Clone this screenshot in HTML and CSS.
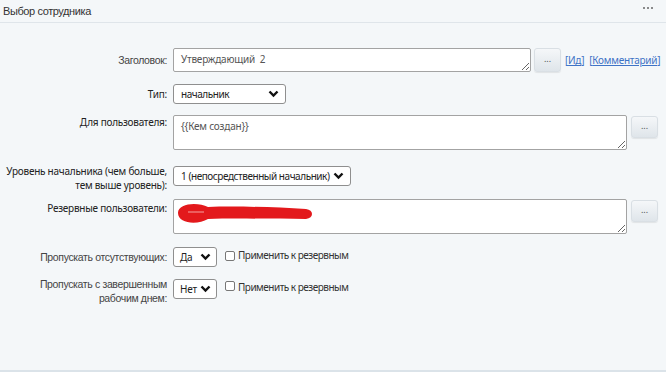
FILE: index.html
```html
<!DOCTYPE html>
<html lang="ru">
<head>
<meta charset="utf-8">
<link rel="stylesheet" href="styles.css">
</head>
<body>
<div class="panel">
  <div class="header">
    <span class="title">Выбор сотрудника</span>
    <span class="dots"><i></i><i></i><i></i></span>
  </div>
  <div class="form">
    <div class="row r1">
      <div class="label thin lh24">Заголовок:</div>
      <textarea class="ta ta-short">Утверждающий  2</textarea>
      <button class="btn b1">...</button>
      <span class="links"><a class="lnk">[<u>Ид</u>]</a><a class="lnk">[<u>Комментарий</u>]</a></span>
    </div>
    <div class="row r2">
      <div class="label lh20">Тип:</div>
      <div class="sel w-type"><span>начальник</span><svg width="11" height="8" viewBox="0 0 11 8"><path d="M1.5 1.5 L5.5 5.5 L9.5 1.5" fill="none" stroke="#111" stroke-width="2.4"/></svg></div>
    </div>
    <div class="row r3">
      <div class="label">Для пользователя:</div>
      <textarea class="ta ta-long">{{Кем создан}}</textarea>
      <button class="btn b2">...</button>
    </div>
    <div class="row r4">
      <div class="label">Уровень начальника (чем больше,<br>тем выше уровень):</div>
      <div class="sel w-level mt2"><span>1 (непосредственный начальник)</span><svg width="11" height="8" viewBox="0 0 11 8"><path d="M1.5 1.5 L5.5 5.5 L9.5 1.5" fill="none" stroke="#111" stroke-width="2.4"/></svg></div>
    </div>
    <div class="row r5">
      <div class="label pt2">Резервные пользователи:</div>
      <div class="ta-wrap">
        <textarea class="ta ta-long"></textarea>
        <svg class="scribble" width="142" height="28" viewBox="0 0 142 28"><path d="M4 13 C 4 3, 24 2, 34 7 C 60 6, 100 7, 132 9 C 140 10, 140 18, 132 19 C 100 19, 60 18, 34 19 C 24 25, 4 24, 4 13 Z" fill="#e3191c"/><path d="M14 12 L30 12" stroke="#f28a8a" stroke-width="1.2"/></svg>
      </div>
      <button class="btn b2">...</button>
    </div>
    <div class="row r6">
      <div class="label thin lh20">Пропускать отсутствующих:</div>
      <div class="sel w-yn"><span>Да</span><svg width="11" height="8" viewBox="0 0 11 8"><path d="M1.5 1.5 L5.5 5.5 L9.5 1.5" fill="none" stroke="#111" stroke-width="2.4"/></svg></div>
      <span class="chk"></span><span class="chk-text">Применить к резервным</span>
    </div>
    <div class="row r7">
      <div class="label thin">Пропускать с завершенным<br>рабочим днем:</div>
      <div class="sel w-yn mt2"><span>Нет</span><svg width="11" height="8" viewBox="0 0 11 8"><path d="M1.5 1.5 L5.5 5.5 L9.5 1.5" fill="none" stroke="#111" stroke-width="2.4"/></svg></div>
      <span class="chk mt6"></span><span class="chk-text mt3">Применить к резервным</span>
    </div>
  </div>
</div>
</body>
</html>
```
FILE: styles.css
```css
html, body {
  margin: 0;
  padding: 0;
  background: #f4f7f9;
}
body {
  font-family: "Noto Sans", "Open Sans", sans-serif;
  font-size: 10px;
  letter-spacing: -0.25px;
  color: #222;
}
.panel {
  height: 372px;
  box-sizing: border-box;
  border-bottom: 2px solid #dbe3e9;
}
.header {
  height: 22px;
  border-bottom: 1px solid #dfe5ea;
  display: flex;
  justify-content: space-between;
  align-items: center;
  padding: 0 13px 0 3px;
}
.title {
  font-family: "Liberation Sans", sans-serif;
  font-size: 11px;
  color: #333;
  letter-spacing: -0.4px;
}
.dots {
  display: flex;
  gap: 1.5px;
  margin-top: -6px;
}
.dots i {
  display: block;
  width: 2.5px;
  height: 2.5px;
  border-radius: 50%;
  background: #666;
}
.form {
  padding-top: 25px;
}
.row {
  display: flex;
  align-items: flex-start;
  white-space: nowrap;
}
.label {
  width: 167px;
  margin-right: 6px;
  text-align: right;
  line-height: 14px;
  color: #222;
  flex: none;
}
.thin {
  font-family: "Liberation Sans", sans-serif;
  font-size: 10.5px;
  color: #444;
  letter-spacing: -0.35px;
}
.lh24 { line-height: 24px; }
.lh20 { line-height: 20px; }
.pt2 { padding-top: 2px; }
.mt2 { margin-top: 2px; }
.mt3 { margin-top: 3px; }
.mt6 { margin-top: 6px; }
.r2 { margin-top: 12px; }
.r3 { margin-top: 11px; }
.r4 { margin-top: 14px; }
.r5 { margin-top: 7px; }
.r6 { margin-top: 13px; }
.r7 { margin-top: 10px; }
.ta {
  display: block;
  box-sizing: border-box;
  border: 1px solid #a3a3a3;
  border-radius: 2px;
  background: #fff;
  font-family: "Noto Sans", sans-serif;
  font-size: 10px;
  letter-spacing: -0.2px;
  color: #555;
  padding: 3px 7px;
  margin: 0;
  resize: both;
  outline: none;
}
.ta-short { width: 358px; height: 24px; }
.ta-long { width: 454px; height: 35px; }
.ta-wrap { position: relative; }
.scribble {
  position: absolute;
  left: 1px;
  top: 1px;
}
.btn {
  box-sizing: border-box;
  width: 27px;
  border: 1px solid #d9dfe4;
  border-radius: 3px;
  background: linear-gradient(#f5f7f9, #dfe5ea);
  color: #555;
  font-size: 9px;
  padding: 0 0 4px;
  font-family: "Noto Sans", sans-serif;
  box-shadow: 0 1px 1px rgba(0,0,0,0.08);
}
.b1 { height: 24px; margin-left: 3px; }
.b2 { height: 22px; margin-left: 4px; margin-top: 1px; }
.links {
  line-height: 24px;
  margin-left: 4px;
  font-size: 10px;
}
.lnk {
  color: #3f73c6;
  margin-right: 5px;
}
.lnk u {
  text-decoration-color: #3f73c6;
}
.sel {
  box-sizing: border-box;
  height: 20px;
  border: 1px solid #8f8f8f;
  border-radius: 3px;
  background: #fff;
  display: flex;
  align-items: center;
  justify-content: space-between;
  padding: 0 6px 0 7px;
  color: #222;
  flex: none;
  font-size: 10px;
  letter-spacing: -0.45px;
}
.w-type { width: 113px; }
.w-level { width: 178px; }
.w-yn { width: 44px; padding-left: 6px; padding-right: 5px; letter-spacing: -0.2px; }
.chk {
  box-sizing: border-box;
  width: 10px;
  height: 10px;
  border: 1px solid #777;
  border-radius: 2px;
  background: #fff;
  margin-left: 8px;
  margin-top: 4px;
  flex: none;
}
.chk-text {
  margin-left: 3px;
  line-height: 14px;
  color: #333;
  letter-spacing: -0.5px;
}
.r6 .chk-text { margin-top: 1px; }
```
